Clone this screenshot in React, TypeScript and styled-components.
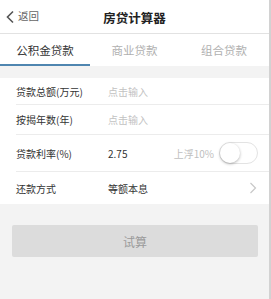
import React, { useState } from "react";
import styled, { createGlobalStyle } from "styled-components";

const Global = createGlobalStyle`
  html, body { margin: 0; padding: 0; background: #ffffff; }
  body { font-family: "Noto Sans CJK SC", "Noto Sans", sans-serif; }
  * { box-sizing: border-box; }
`;

const Screen = styled.div`
  width: 271px;
  height: 299px;
  background: #f3f3f3;
  border-right: 2px solid #d2d2d2;
  display: flex;
  flex-direction: column;
  overflow: hidden;
`;

const Header = styled.div`
  height: 34px;
  background: #fff;
  border-bottom: 1px solid #e2e2e2;
  display: grid;
  grid-template-columns: 60px 1fr 60px;
  align-items: center;
`;

const Back = styled.div`
  display: flex;
  align-items: center;
  gap: 3px;
  padding-left: 5px;
  color: #666;
  font-size: 10.5px;
  line-height: 1;
`;

const Title = styled.div`
  text-align: center;
  font-size: 12.5px;
  font-weight: 700;
  color: #222;
  padding-top: 1px;
`;

const Tabs = styled.div`
  height: 32px;
  background: #fff;
  display: grid;
  grid-template-columns: 90px 1fr 90px;
`;

const Tab = styled.div<{ $active?: boolean }>`
  display: flex;
  align-items: center;
  justify-content: center;
  font-size: 11.5px;
  color: ${(p) => (p.$active ? "#333" : "#b0b0b0")};
  border-bottom: 2px solid ${(p) => (p.$active ? "#4f86b0" : "transparent")};
  padding-top: 1px;
`;

const Gap = styled.div`
  height: 12px;
`;

const Form = styled.div`
  background: #fff;
  display: flex;
  flex-direction: column;
`;

const Row = styled.div<{ $h: number; $last?: boolean }>`
  height: ${(p) => p.$h}px;
  margin-left: 16px;
  padding-right: 12px;
  display: grid;
  grid-template-columns: 92px 1fr auto;
  align-items: center;
  border-bottom: ${(p) => (p.$last ? "none" : "1px solid #ececec")};
  font-size: 10px;
`;

const Label = styled.div`
  color: #333;
`;

const Value = styled.div<{ $placeholder?: boolean }>`
  color: ${(p) => (p.$placeholder ? "#c2c2c2" : "#333")};
  font-size: ${(p) => (p.$placeholder ? "10px" : "10px")};
`;

const Extra = styled.div`
  display: flex;
  align-items: center;
  gap: 5px;
  color: #c0c0c0;
  font-size: 10px;
`;

const Toggle = styled.div`
  width: 39px;
  height: 22px;
  border-radius: 11px;
  border: 1px solid #e3e3e3;
  background: #fff;
  position: relative;
  margin-right: -1px;
`;

const Knob = styled.div`
  position: absolute;
  left: 0;
  top: 0;
  width: 20px;
  height: 20px;
  border-radius: 50%;
  background: #fff;
  box-shadow: 0 1px 3px rgba(0, 0, 0, 0.3);
`;

const ButtonWrap = styled.div`
  padding: 21px 11px 0 12px;
`;

const Button = styled.div`
  height: 32px;
  background: #dcdcdc;
  border-radius: 2px;
  display: flex;
  align-items: center;
  justify-content: center;
  color: #9a9a9a;
  font-size: 12px;
`;

const BackIcon = () => (
  <svg width="10" height="14" viewBox="0 0 10 14">
    <path d="M8 1.5 L2.5 7 L8 12.5" fill="none" stroke="#555" strokeWidth="1.6" />
  </svg>
);

const Chevron = () => (
  <svg width="8" height="12" viewBox="0 0 8 12">
    <path d="M1.5 1 L6.5 6 L1.5 11" fill="none" stroke="#c8c8c8" strokeWidth="1.2" />
  </svg>
);

export default function App() {
  const [tab] = useState(0);
  const tabs = ["公积金贷款", "商业贷款", "组合贷款"];
  return (
    <>
      <Global />
      <Screen>
        <Header>
          <Back>
            <BackIcon />
            <span>返回</span>
          </Back>
          <Title>房贷计算器</Title>
          <div />
        </Header>
        <Tabs>
          {tabs.map((t, i) => (
            <Tab key={t} $active={i === tab}>
              {t}
            </Tab>
          ))}
        </Tabs>
        <Gap />
        <Form>
          <Row $h={27}>
            <Label>贷款总额(万元)</Label>
            <Value $placeholder>点击输入</Value>
            <div />
          </Row>
          <Row $h={30}>
            <Label>按揭年数(年)</Label>
            <Value $placeholder>点击输入</Value>
            <div />
          </Row>
          <Row $h={37}>
            <Label>贷款利率(%)</Label>
            <Value>2.75</Value>
            <Extra>
              <span>上浮10%</span>
              <Toggle>
                <Knob />
              </Toggle>
            </Extra>
          </Row>
          <Row $h={32} $last>
            <Label>还款方式</Label>
            <Value>等额本息</Value>
            <Chevron />
          </Row>
        </Form>
        <ButtonWrap>
          <Button>试算</Button>
        </ButtonWrap>
      </Screen>
    </>
  );
}
